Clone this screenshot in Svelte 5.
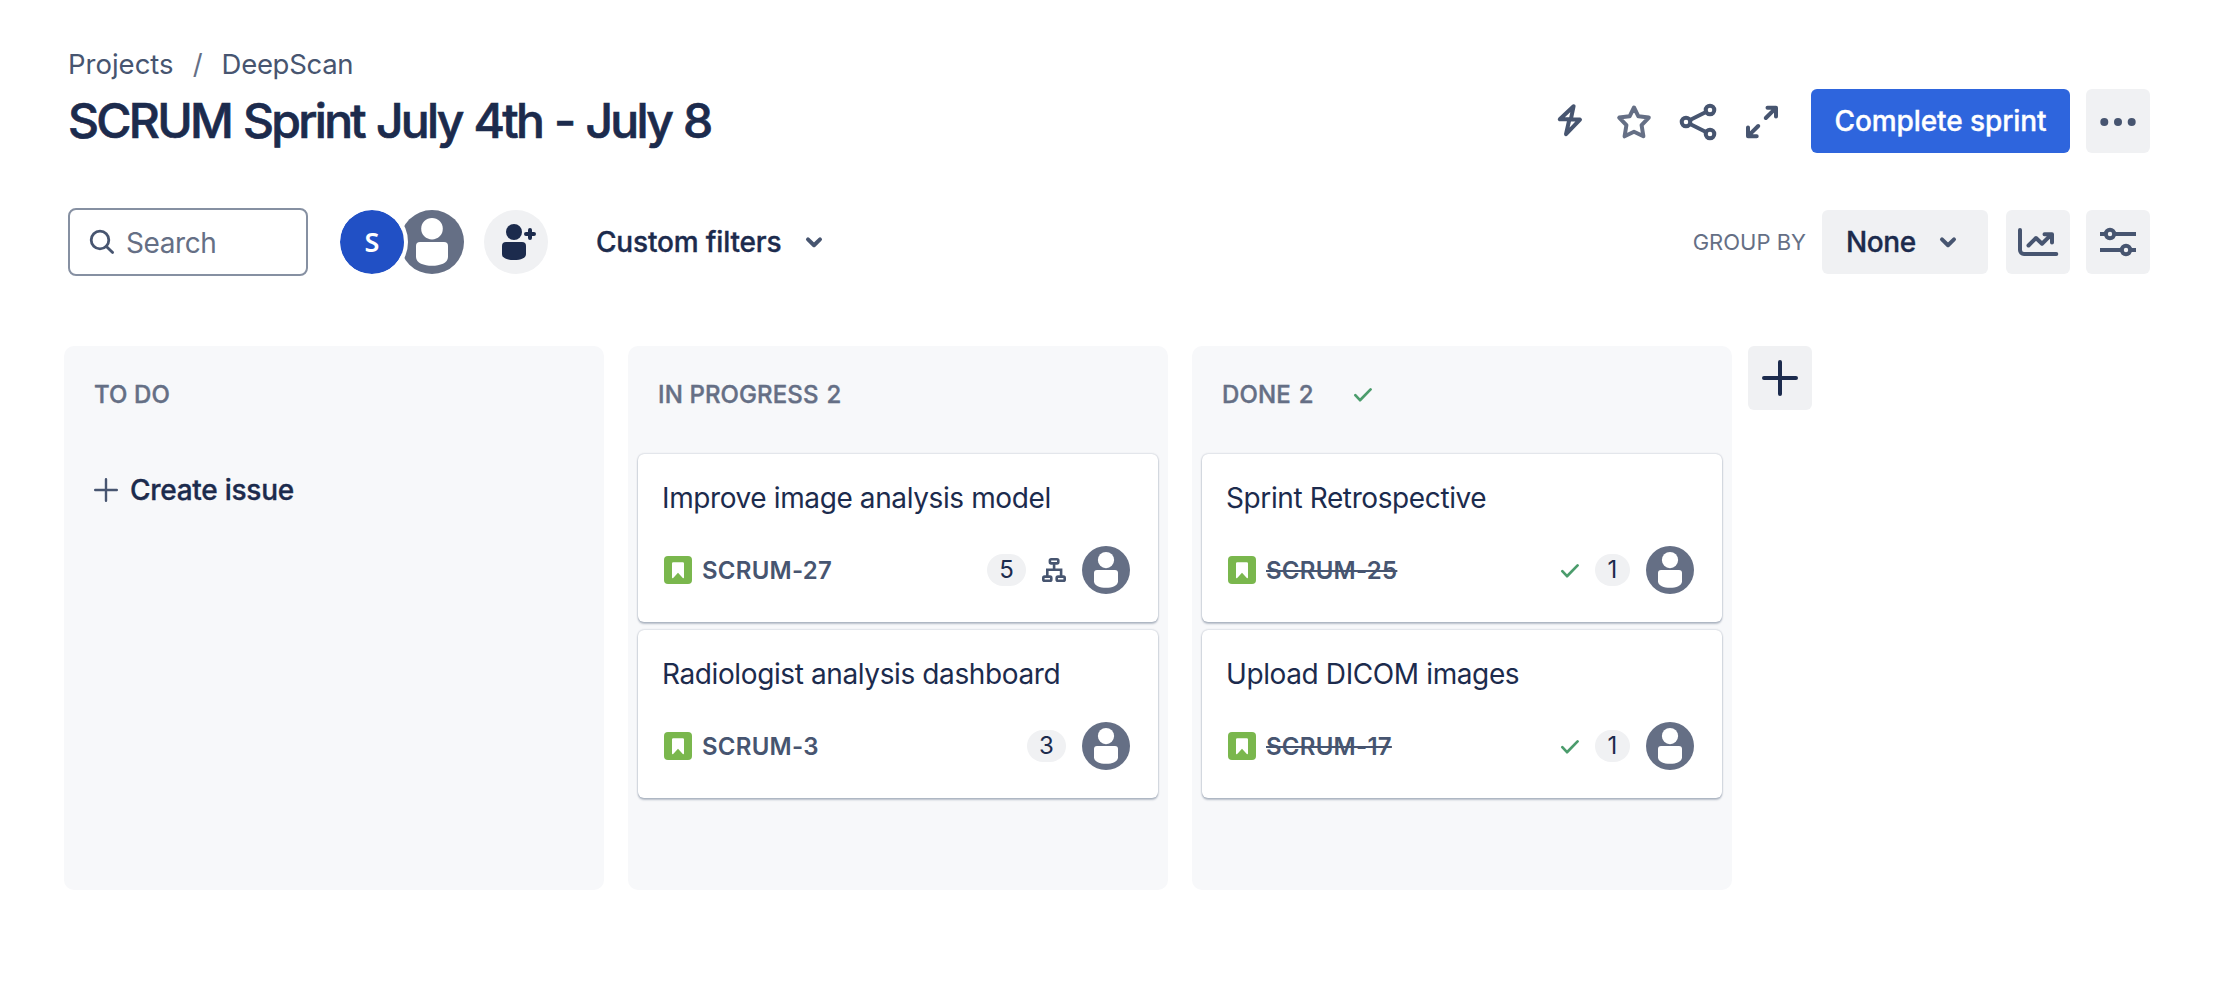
<script>
  const columns = [
    { name: 'TO DO', cards: [] },
    {
      name: 'IN PROGRESS',
      count: 2,
      cards: [
        { title: 'Improve image analysis model', key: 'SCRUM-27', points: 5, children: true },
        { title: 'Radiologist analysis dashboard', key: 'SCRUM-3', points: 3 }
      ]
    },
    {
      name: 'DONE',
      count: 2,
      done: true,
      cards: [
        { title: 'Sprint Retrospective', key: 'SCRUM-25', points: 1 },
        { title: 'Upload DICOM images', key: 'SCRUM-17', points: 1 }
      ]
    }
  ];
</script>

{#snippet person(size)}
  <svg class="person" width={size} height={size} viewBox="0 0 64 64">
    <circle cx="32" cy="32" r="32" fill="#656f85" />
    <circle cx="32" cy="18.7" r="10.8" fill="#fff" />
    <path d="M16 36a4 4 0 0 1 4-4h24a4 4 0 0 1 4 4v11c0 6-8 8.8-16 8.8s-16-2.8-16-8.8z" fill="#fff" />
  </svg>
{/snippet}

{#snippet check()}
  <svg class="check" width="20" height="16" viewBox="0 0 20 16">
    <path d="M2.3 8.2 7 13.2 17.6 2.4" fill="none" stroke="#4b9c6c" stroke-width="2.7" stroke-linecap="round" stroke-linejoin="round" />
  </svg>
{/snippet}

{#snippet chevron()}
  <svg width="20" height="16" viewBox="0 0 20 16">
    <path d="M4 5.4 10 11.2 16 5.4" fill="none" stroke="#475570" stroke-width="4" stroke-linecap="round" stroke-linejoin="round" />
  </svg>
{/snippet}

<div class="page">
  <nav class="crumbs">
    <span>Projects</span><span class="slash">/</span><span class="project">DeepScan</span>
  </nav>

  <header class="heading">
    <h1>SCRUM Sprint July 4th - July 8</h1>
    <div class="actions">
      <svg class="icon" viewBox="0 0 64 64">
        <path d="M35.6 17.2 21.8 30.3H31.4L28 45.2 42 30.6H32.8Z" />
      </svg>
      <svg class="icon star" viewBox="0 0 64 64">
        <path d="M32 18.5 36.4 27.3 46.8 28.6 39.6 36.2 41.4 47.3 32 42.8 22.6 47.3 24.4 36.2 17.2 28.6 27.6 27.3Z" />
      </svg>
      <svg class="icon" viewBox="0 0 64 64">
        <circle cx="20" cy="33" r="4.3" /><circle cx="44" cy="21" r="4.3" /><circle cx="44" cy="45" r="4.3" />
        <path d="M24 31 40 23M24 35l16 8" />
      </svg>
      <svg class="icon" viewBox="0 0 64 64">
        <path d="M37.5 18.8H46V27.5M45.5 19.3 35.8 29M18 38.5v8.7h8.7M18.5 46.7 28.2 37" />
      </svg>
      <button class="primary">Complete sprint</button>
      <button class="square">
        <svg viewBox="0 0 64 64" fill="#475570">
          <circle cx="18.3" cy="33" r="4" /><circle cx="32" cy="33" r="4" /><circle cx="45.7" cy="33" r="4" />
        </svg>
      </button>
    </div>
  </header>

  <div class="toolbar">
    <label class="search">
      <svg width="28" height="28" viewBox="0 0 28 28">
        <circle cx="12" cy="12" r="8.8" /><path d="M18.4 18.4 24.6 24.6" />
      </svg>
      <span>Search</span>
    </label>
    <div class="people">
      <div class="initial">S</div>
      {@render person(64)}
    </div>
    <button class="add-person">
      <svg viewBox="0 0 64 64">
        <circle cx="30" cy="22" r="8" />
        <path d="M18 36a4 4 0 0 1 4-4h16a4 4 0 0 1 4 4v8c0 4-5 6-12 6s-12-2-12-6z" />
        <path d="M46 20v8M42 24h8" stroke="#1c2b4d" stroke-width="4" stroke-linecap="round" />
      </svg>
    </button>
    <button class="filters"><span>Custom filters</span>{@render chevron()}</button>
    <div class="view">
      <span class="group">GROUP BY</span>
      <button class="select"><span>None</span>{@render chevron()}</button>
      <button class="square chart">
        <svg class="icon" viewBox="0 0 64 64">
          <path d="M14 20V40a4 4 0 0 0 4 4H50.3M22.5 35.5 30 28l6 5.7 9-8.8M38.5 24.3H46V32.5" />
        </svg>
      </button>
      <button class="square">
        <svg class="icon flat" viewBox="0 0 64 64">
          <path d="M14 24h5.5M28.5 24H50M14 40H35.5M44.5 40H50" />
          <circle cx="24" cy="24" r="4.2" /><circle cx="40" cy="40" r="4.2" />
        </svg>
      </button>
    </div>
  </div>

  <main class="board">
    {#each columns as column}
      <section class="column">
        <h2>
          <span>{column.name}</span>
          {#if column.count}<span class="count">{column.count}</span>{/if}
          {#if column.done}{@render check()}{/if}
        </h2>
        {#each column.cards as card}
          <article class="card">
            <p>{card.title}</p>
            <footer>
              <svg class="story" width="28" height="28" viewBox="0 0 28 28">
                <rect width="28" height="28" rx="4" fill="#7ab74d" />
                <path d="M8 7.5a1.2 1.2 0 0 1 1.2-1.2h9.6a1.2 1.2 0 0 1 1.2 1.2V21.5c0 .7-.8.9-1.2.4L14 16.8 9.2 21.9c-.4.5-1.2.3-1.2-.4z" fill="#fff" />
              </svg>
              <span class="key" class:closed={column.done}>{card.key}</span>
              {#if column.done}{@render check()}{/if}
              <span class="points" class:narrow={card.points === 1}>{card.points}</span>
              {#if card.children}
                <svg class="tree" width="24" height="24" viewBox="0 0 24 24">
                  <rect x="7.9" y="1.3" width="8.4" height="4.1" rx="1.3" />
                  <rect x="1.3" y="18.6" width="8" height="4.1" rx="1.3" />
                  <rect x="14.7" y="18.6" width="8" height="4.1" rx="1.3" />
                  <path d="M12.1 6v5.7M5.3 18V11.7H19.1V18" />
                </svg>
              {/if}
              {@render person(48)}
            </footer>
          </article>
        {/each}
        {#if !column.cards.length}
          <button class="create">
            <svg width="24" height="24" viewBox="0 0 24 24">
              <path d="M12 1.2v21.6M1.2 12h21.6" stroke="#475570" stroke-width="2.4" stroke-linecap="round" />
            </svg>
            <span>Create issue</span>
          </button>
        {/if}
      </section>
    {/each}
    <button class="square add-column">
      <svg viewBox="0 0 64 64">
        <path d="M32 16v32M16 32h32" stroke="#1c2b4d" stroke-width="4" stroke-linecap="round" />
      </svg>
    </button>
  </main>
</div>

<style>
  :global(body) {
    background: #fff;
  }
  .page {
    box-sizing: border-box;
    height: 990px;
    padding: 44px 64px 0;
    font-family: Inter, 'Liberation Sans', sans-serif;
    font-size: 28px;
    line-height: 40px;
    color: #1c2b4d;
  }
  .page :global(svg) {
    display: block;
    flex: none;
  }
  button {
    box-sizing: border-box;
    border: 0;
    padding: 0;
    background: none;
    font: inherit;
    color: inherit;
  }
  h1,
  h2,
  p {
    margin: 0;
  }
  .crumbs {
    display: flex;
    height: 40px;
    padding-left: 4px;
    color: #475570;
    font-size: 27.5px;
  }
  .slash {
    width: 48px;
    text-align: center;
    color: #656f85;
  }
  .project {
    letter-spacing: -0.3px;
  }
  .heading {
    display: flex;
    align-items: center;
    justify-content: space-between;
    height: 64px;
    margin-top: 5px;
    padding-left: 4px;
  }
  h1 {
    font-size: 48px;
    font-weight: 500;
    line-height: 56px;
    letter-spacing: -2.7px;
    word-spacing: 1.8px;
    -webkit-text-stroke: 0.7px;
  }
  .actions {
    display: flex;
  }
  .icon {
    width: 64px;
    height: 64px;
    fill: none;
    stroke: #475570;
    stroke-width: 4;
    stroke-linecap: round;
    stroke-linejoin: round;
  }
  .flat {
    stroke-linecap: butt;
  }
  .star {
    stroke: #656f85;
  }
  .primary,
  .filters,
  .select,
  .create {
    font-weight: 500;
    -webkit-text-stroke: 0.35px;
  }
  .primary {
    width: 259px;
    height: 64px;
    margin: 0 16px 0 17px;
    border-radius: 6px;
    background: #2e65dd;
    color: #fff;
    letter-spacing: -0.1px;
  }
  .square {
    width: 64px;
    height: 64px;
    border-radius: 6px;
    background: #f0f1f3;
  }
  .toolbar {
    display: flex;
    align-items: center;
    height: 68px;
    margin-top: 55px;
    padding-left: 4px;
  }
  .search {
    box-sizing: border-box;
    display: flex;
    align-items: center;
    gap: 10px;
    width: 240px;
    height: 68px;
    padding-left: 18px;
    border: 2px solid #8690a2;
    border-radius: 8px;
    color: #656f85;
  }
  .search span {
    padding-top: 2px;
    letter-spacing: -0.4px;
  }
  .search svg {
    fill: none;
    stroke: #475570;
    stroke-width: 2.8;
    stroke-linecap: round;
  }
  .people {
    display: flex;
    align-items: center;
    margin-left: 28px;
  }
  .people :global(.person) {
    margin-left: -8px;
  }
  .initial {
    position: relative;
    width: 64px;
    height: 64px;
    border: 4px solid #fff;
    border-radius: 50%;
    background: #2150c5;
    background-clip: padding-box;
    color: #fff;
    font-family: 'Noto Sans', sans-serif;
    font-size: 27px;
    font-weight: 600;
    line-height: 63px;
    text-align: center;
  }
  .add-person {
    width: 64px;
    height: 64px;
    margin-left: 20px;
    border-radius: 50%;
    background: #f0f1f3;
    fill: #1c2b4d;
  }
  .filters {
    display: flex;
    align-items: center;
    margin-left: 48px;
    letter-spacing: -0.17px;
  }
  .filters span {
    width: 208px;
    text-align: left;
  }
  .view {
    display: flex;
    align-items: center;
    margin-left: auto;
  }
  .group {
    font-size: 22px;
    color: #656f85;
    margin-right: 16px;
  }
  .select {
    display: flex;
    align-items: center;
    justify-content: space-between;
    width: 166px;
    height: 64px;
    padding: 0 30px 0 24px;
    border-radius: 6px;
    background: #f0f1f3;
    letter-spacing: -0.4px;
  }
  .chart {
    margin: 0 16px 0 18px;
  }
  .board {
    display: flex;
    gap: 24px;
    align-items: flex-start;
    margin-top: 70px;
  }
  .column {
    box-sizing: border-box;
    display: flex;
    flex-direction: column;
    gap: 8px;
    width: 540px;
    height: 544px;
    padding: 32px 10px 0;
    border-radius: 10px;
    background: #f7f8fa;
  }
  h2 {
    display: flex;
    align-items: center;
    height: 34px;
    margin-bottom: 34px;
    padding-left: 20px;
    font-size: 24px;
    font-weight: 500;
    line-height: 34px;
    letter-spacing: 0.1px;
    color: #656f85;
    -webkit-text-stroke: 0.4px;
  }
  .count {
    margin-left: 8px;
  }
  h2 :global(.check) {
    margin-left: 39px;
  }
  .card {
    box-sizing: border-box;
    height: 168px;
    padding: 24px 28px 0 24px;
    border-radius: 6px;
    background: #fff;
    box-shadow: 0 2px 2px rgba(9, 30, 66, 0.25), 0 0 2px rgba(9, 30, 66, 0.31);
  }
  .card p {
    letter-spacing: -0.39px;
  }
  footer {
    display: flex;
    align-items: center;
    height: 48px;
    margin-top: 28px;
    padding-left: 2px;
  }
  .key {
    margin: 0 auto 0 10px;
    padding-top: 1px;
    font-size: 24px;
    font-weight: 600;
    letter-spacing: 0.25px;
    color: #475570;
  }
  .closed {
    text-decoration: line-through;
  }
  .closed + :global(.check) {
    margin-right: -1px;
    margin-top: 2px;
  }
  .points {
    width: 39px;
    height: 32px;
    margin: 0 16px;
    border-radius: 16px;
    background: #f0f1f3;
    font-size: 24px;
    line-height: 32px;
    text-align: center;
  }
  .narrow {
    width: 35px;
  }
  .tree {
    margin-right: 16px;
    fill: none;
    stroke: #475570;
    stroke-width: 2.6;
  }
  .create {
    display: flex;
    align-items: center;
    gap: 12px;
    margin-top: 16px;
    padding-left: 20px;
    letter-spacing: -0.27px;
  }
  .add-column {
    margin-left: -8px;
  }
</style>
